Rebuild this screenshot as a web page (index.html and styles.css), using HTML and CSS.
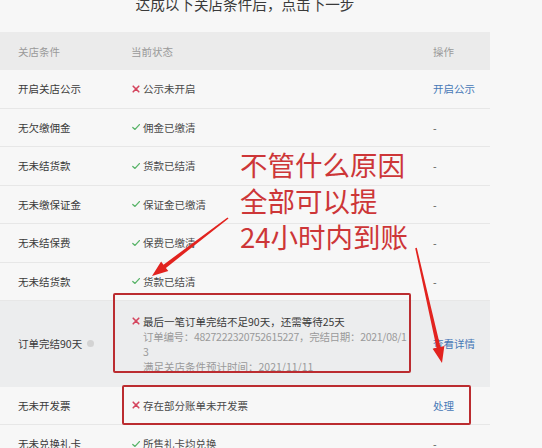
FILE: index.html
```html
<!DOCTYPE html>
<html lang="zh-CN">
<head>
<meta charset="utf-8">
<title>关店条件</title>
<link rel="stylesheet" href="styles.css">
</head>
<body>
<div class="page">
  <div class="title">达成以下关店条件后，点击下一步</div>
  <div class="table">
    <div class="row head">
      <div class="c1">关店条件</div>
      <div class="c2">当前状态</div>
      <div class="c3">操作</div>
    </div>
    <div class="row">
      <div class="c1">开启关店公示</div>
      <div class="c2"><svg class="ic" viewBox="0 0 8 8"><path class="x" d="M1.2 1.2L6.8 6.8M6.8 1.2L1.2 6.8"/></svg>公示未开启</div>
      <div class="c3 link">开启公示</div>
    </div>
    <div class="row">
      <div class="c1">无欠缴佣金</div>
      <div class="c2"><svg class="ic" viewBox="0 0 8 8"><path class="ok" d="M0.8 4.4L3 6.4L7.4 1.6"/></svg>佣金已缴清</div>
      <div class="c3">-</div>
    </div>
    <div class="row">
      <div class="c1">无未结货款</div>
      <div class="c2"><svg class="ic" viewBox="0 0 8 8"><path class="ok" d="M0.8 4.4L3 6.4L7.4 1.6"/></svg>货款已结清</div>
      <div class="c3">-</div>
    </div>
    <div class="row">
      <div class="c1">无未缴保证金</div>
      <div class="c2"><svg class="ic" viewBox="0 0 8 8"><path class="ok" d="M0.8 4.4L3 6.4L7.4 1.6"/></svg>保证金已缴清</div>
      <div class="c3">-</div>
    </div>
    <div class="row">
      <div class="c1">无未结保费</div>
      <div class="c2"><svg class="ic" viewBox="0 0 8 8"><path class="ok" d="M0.8 4.4L3 6.4L7.4 1.6"/></svg>保费已缴清</div>
      <div class="c3">-</div>
    </div>
    <div class="row">
      <div class="c1">无未结货款</div>
      <div class="c2"><svg class="ic" viewBox="0 0 8 8"><path class="ok" d="M0.8 4.4L3 6.4L7.4 1.6"/></svg>货款已结清</div>
      <div class="c3">-</div>
    </div>
    <div class="row tall">
      <div class="c1">订单完结90天<span class="info"></span></div>
      <div class="c2 multi">
        <svg class="ic top" viewBox="0 0 8 8"><path class="x" d="M1.2 1.2L6.8 6.8M6.8 1.2L1.2 6.8"/></svg>
        <div class="lines">
          <div class="main">最后一笔订单完结不足90天，还需等待25天</div>
          <div class="sub tight">订单编号：4827222320752615227，完结日期：2021/08/13</div>
          <div class="sub">满足关店条件预计时间：2021/11/11</div>
        </div>
      </div>
      <div class="c3 link">查看详情</div>
    </div>
    <div class="row">
      <div class="c1">无未开发票</div>
      <div class="c2"><svg class="ic" viewBox="0 0 8 8"><path class="x" d="M1.2 1.2L6.8 6.8M6.8 1.2L1.2 6.8"/></svg>存在部分账单未开发票</div>
      <div class="c3 link">处理</div>
    </div>
    <div class="row">
      <div class="c1">无未兑换礼卡</div>
      <div class="c2"><svg class="ic" viewBox="0 0 8 8"><path class="ok" d="M0.8 4.4L3 6.4L7.4 1.6"/></svg>所售礼卡均兑换</div>
      <div class="c3">-</div>
    </div>
  </div>

  <div class="note">不管什么原因<br>全部可以提<br>24小时内到账</div>
  <div class="box box1"></div>
  <div class="box box2"></div>
  <svg class="arrows" viewBox="0 0 542 448" width="542" height="448">
    <polygon points="228.5,224.6 165.9,273.9 168.3,277.1 152,282 161.1,267.5 163.5,270.7 227.5,223.4"/>
    <polygon points="416.8,253.8 440.45,352.96 444.35,352.1 442,369 432.65,354.7 436.55,353.84 415.2,254.2"/>
  </svg>
</div>
</body>
</html>
```
FILE: styles.css
```css
* { box-sizing: border-box; }
html, body {
  margin: 0;
  padding: 0;
  background: #f7f7f7;
  width: 542px;
  height: 448px;
  overflow: hidden;
}
body {
  font-family: "Noto Sans CJK SC", "Noto Sans", sans-serif;
  color: #3a3a3a;
}
.page {
  position: relative;
  width: 542px;
  height: 448px;
}
.title {
  width: 490px;
  text-align: center;
  font-size: 14.6px;
  line-height: 20px;
  color: #3a3a3a;
  margin-top: -6px;
  margin-bottom: 18px;
}
.table {
  width: 490px;
  font-size: 10.5px;
}
.row {
  display: grid;
  grid-template-columns: 131px 302px 57px;
  align-items: center;
  height: 38.5px;
  border-bottom: 1px solid #e7e7e7;
}
.row.head {
  height: 38px;
  background: #ebebeb;
  border-bottom: none;
}
.row.head .c1, .row.head .c2, .row.head .c3 { color: #9a9a9a; }
.row.tall {
  height: 85.5px;
  background: #ecedee;
  border-bottom: none;
}
.c1 {
  padding-left: 18px;
  color: #3a3a3a;
  display: flex;
  align-items: center;
}
.c2 {
  display: flex;
  align-items: center;
  color: #4a4a4a;
}
.c3 { color: #555; }
.link { color: #4677b6; }
.ic {
  width: 8px;
  height: 8px;
  margin: 0 3px 0 1px;
  flex: none;
}
.ic path { fill: none; stroke-linecap: round; stroke-linejoin: round; }
.ic .x { stroke: #d4455e; stroke-width: 1.6; }
.ic .ok { stroke: #58b368; stroke-width: 1.3; }
.info {
  display: inline-block;
  width: 7px;
  height: 7px;
  border-radius: 50%;
  background: #d3d3d3;
  margin-left: 5px;
}
.multi { align-items: flex-start; }
.ic.top { margin-top: 3.5px; }
.lines {
  width: 268px;
  line-height: 15px;
  word-break: break-all;
}
.main { color: #3a3a3a; }
.sub { color: #9a9a9a; }
.sub.tight { letter-spacing: -0.3px; }
.note {
  position: absolute;
  left: 240px;
  top: 152px;
  font-size: 27.5px;
  line-height: 36px;
  color: #cd3638;
  white-space: nowrap;
}
.box {
  position: absolute;
  border: 2px solid #bb2c30;
  border-radius: 2px;
}
.box1 { left: 113px; top: 299px; width: 298px; height: 80px; }
.box2 { left: 122px; top: 391px; width: 349px; height: 40px; }
.arrows {
  position: absolute;
  left: 0;
  top: 0;
}
.arrows polygon { fill: #e2231f; }
```
